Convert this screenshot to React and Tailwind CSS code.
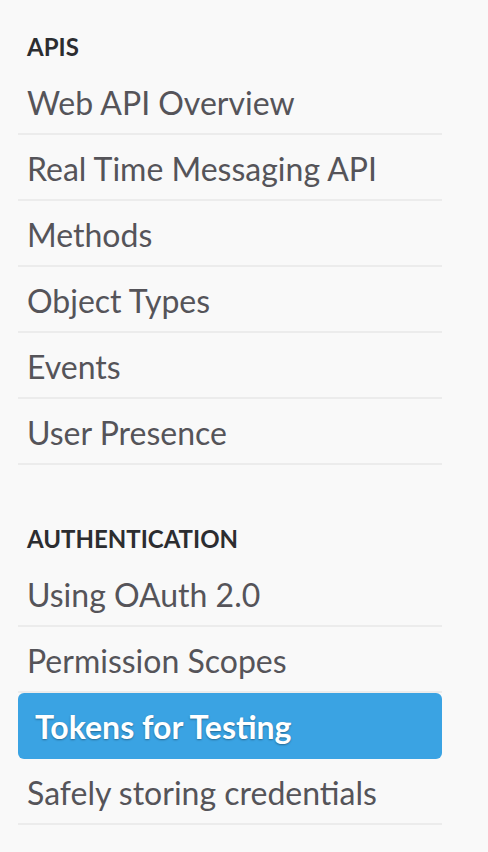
import React from "react";

const sections = [
  {
    titulo: "APIS",
    items: [
      "Web API Overview",
      "Real Time Messaging API",
      "Methods",
      "Object Types",
      "Events",
      "User Presence",
    ],
  },
  {
    titulo: "AUTHENTICATION",
    items: [
      "Using OAuth 2.0",
      "Permission Scopes",
      "Tokens for Testing",
      "Safely storing credentials",
    ],
  },
];

const activo = "Tokens for Testing";

const App = () => {
  return (
    <div
      className="min-h-[852px] w-[488px] bg-[#f9f9f9] pt-[24px]"
      style={{ fontFamily: "Lato, 'Open Sans', sans-serif" }}
    >
      <div className="ml-[18px] w-[424px] flex flex-col gap-[51px]">
        {sections.map((s) => (
          <div key={s.titulo} className="flex flex-col">
            <h2 className="h-[45px] flex items-center pl-[9px] text-[24px] font-bold uppercase text-[#2c2d30]">
              {s.titulo}
            </h2>
            <ul className="flex flex-col">
              {s.items.map((item) =>
                item === activo ? (
                  <li
                    key={item}
                    className="h-[66px] flex items-center pl-[17px] pt-[2px] rounded-[6px] bg-[#3aa3e3] text-[32px] font-bold text-white [text-shadow:0_1px_2px_rgba(0,0,0,0.35)]"
                  >
                    {item}
                  </li>
                ) : (
                  <li
                    key={item}
                    className="h-[66px] flex items-center pl-[9px] pt-[4px] border-b-2 border-[#ececec] text-[32px] text-[#555459]"
                  >
                    {item}
                  </li>
                )
              )}
            </ul>
          </div>
        ))}
      </div>
    </div>
  );
};

export default App;
